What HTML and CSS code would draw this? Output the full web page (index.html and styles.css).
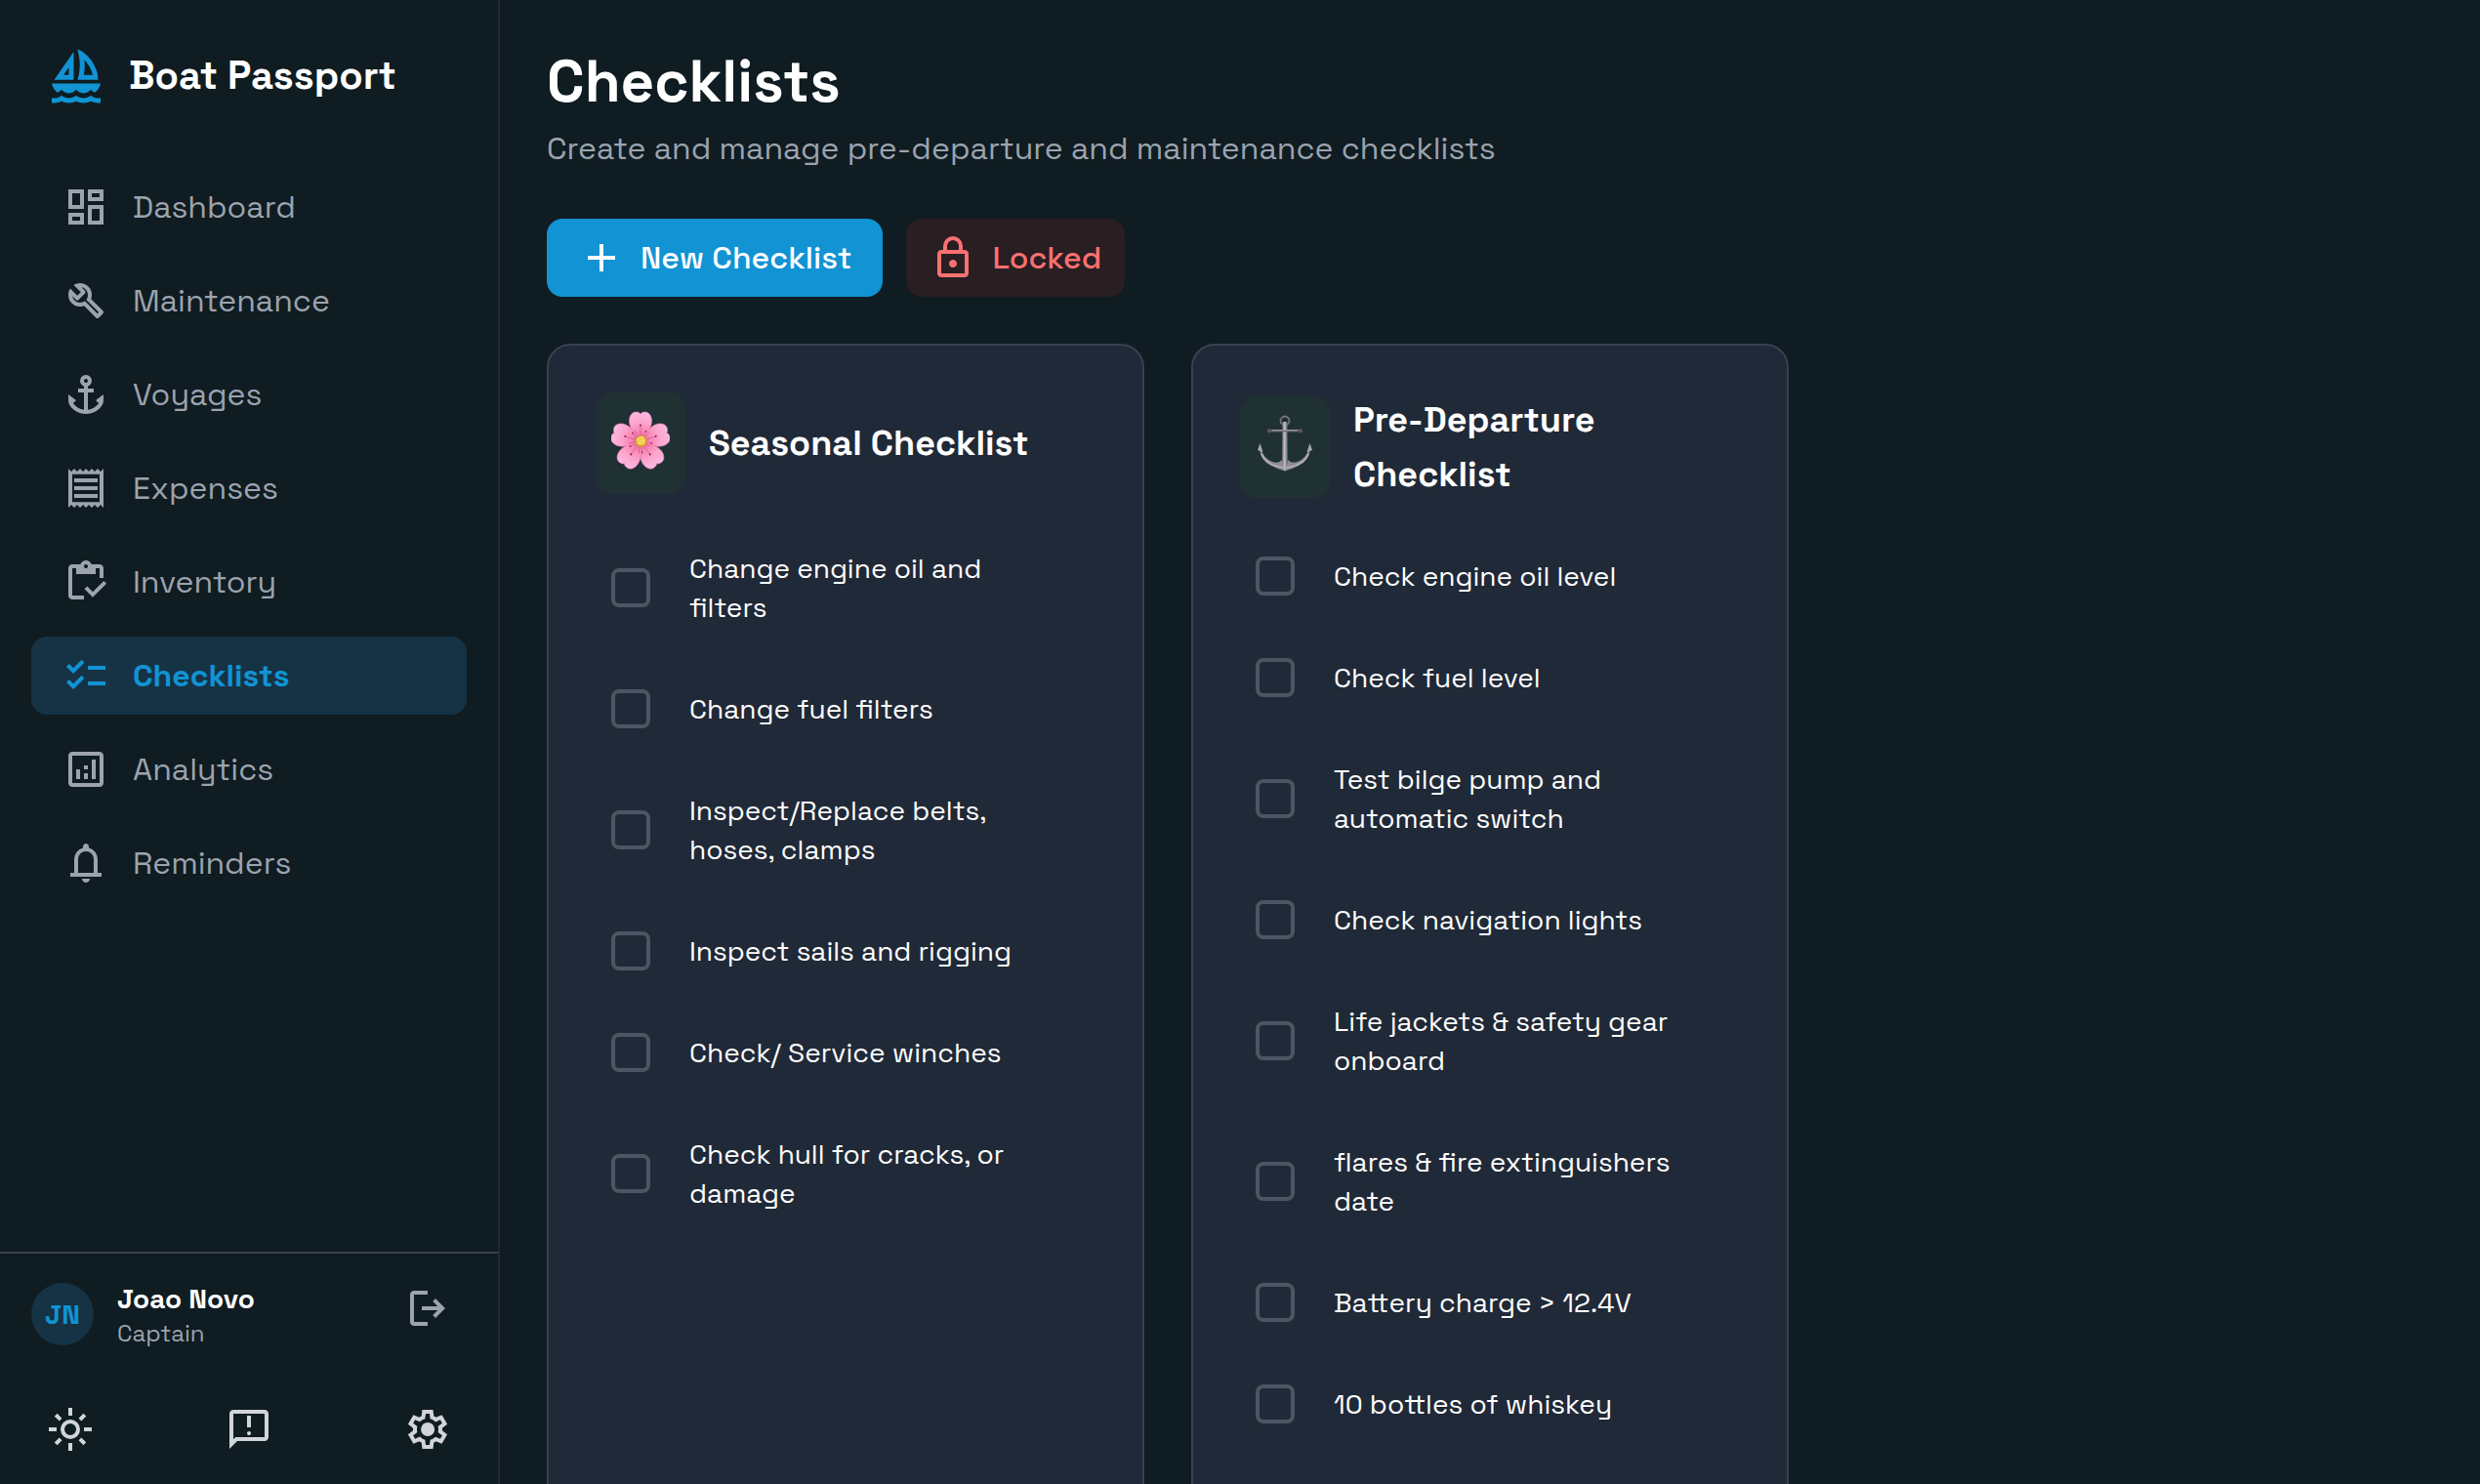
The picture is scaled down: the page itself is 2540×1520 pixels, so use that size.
FILE: index.html
```html
<!DOCTYPE html>
<html lang="en">
<head>
<meta charset="utf-8">
<meta name="viewport" content="width=device-width, initial-scale=1">
<title>Checklists - Boat Passport</title>
<link rel="stylesheet" href="styles.css">
</head>
<body>
<div class="app">
  <aside class="sidebar">
    <div class="brand">
      <svg class="brand-icon" viewBox="0 -960 960 960" aria-hidden="true"><path d="m120-420 320-460v460H120Zm153-80h87v-125l-87 125Zm227 80q12-28 26-98t14-142q0-72-13.5-148T500-920q61 18 121.5 67t109 117q48.5 68 79 149.5T840-420H500Zm104-80h148q-17-77-55.5-141T615-750q2 21 3.5 43.5T620-660q0 47-4.5 87T604-500ZM360-200q-36 0-67-17t-53-43q-14 15-30.5 28T173-211q-35-26-59.5-64.5T80-360h800q-9 46-33.5 84.5T787-211q-20-8-36.5-21T720-260q-23 26-53.5 43T600-200q-36 0-67-17t-53-43q-22 26-53 43t-67 17ZM80-40v-80h40q32 0 62-10t58-30q28 20 58 29.5t62 9.5q32 0 61.5-9.5T480-160q28 20 58 29.5t62 9.5q32 0 61.5-9.5T720-160q29 20 58.5 30t61.5 10h40v80h-40q-31 0-61-7.5T720-70q-29 15-59 22.5T600-40q-31 0-61-7.5T480-70q-29 15-59 22.5T360-40q-31 0-61-7.5T240-70q-29 15-59 22.5T120-40H80Z"/></svg>
      <span class="brand-name">Boat Passport</span>
    </div>
    <nav class="nav">
      <a class="nav-link" href="#dashboard"><svg class="icon" viewBox="0 -960 960 960" aria-hidden="true"><path d="M520-600v-240h320v240H520ZM120-440v-400h320v400H120Zm400 320v-400h320v400H520Zm-400 0v-240h320v240H120Zm80-400h160v-240H200v240Zm400 320h160v-240H600v240Zm0-480h160v-80H600v80ZM200-200h160v-80H200v80Z"/></svg>Dashboard</a>
      <a class="nav-link" href="#maintenance"><svg class="icon" viewBox="0 -960 960 960" aria-hidden="true"><path d="M686-132 444-376q-20 8-40.5 12t-43.5 4q-100 0-170-70t-70-170q0-36 10-68.5t28-61.5l146 146 72-72-146-146q29-18 61.5-28t68.5-10q100 0 170 70t70 170q0 23-4 43.5T584-516l244 242q12 12 12 29t-12 29l-84 84q-12 12-29 12t-29-12Zm29-85 27-27-256-256q18-20 26-46.5t8-53.5q0-60-38.5-104.5T386-758l74 74q12 12 12 28t-12 28L332-500q-12 12-28 12t-28-12l-74-74q9 57 53.5 95.5T360-440q26 0 52-8t47-25l256 256Z"/></svg>Maintenance</a>
      <a class="nav-link" href="#voyages"><svg class="icon" viewBox="0 -960 960 960" aria-hidden="true"><path d="M480-80q-61 0-125-22t-116-60q-52-38-85.5-89T120-360v-120l160 120-62 62q29 51 93.5 89T440-164v-356H320v-80h120v-47q-36-13-58-43.5T360-760q0-50 35-85t85-35q50 0 85 35t35 85q0 39-22 69.5T520-647v47h120v80H520v356q64-7 128.5-45t93.5-89l-62-62 160-120v120q0 58-33.5 109T721-162q-52 38-116 60T480-80Zm0-640q17 0 28.5-11.5T520-760q0-17-11.5-28.5T480-800q-17 0-28.5 11.5T440-760q0 17 11.5 28.5T480-720Z"/></svg>Voyages</a>
      <a class="nav-link" href="#expenses"><svg class="icon" viewBox="0 0 24 24" aria-hidden="true"><path d="M19.5 3.5L18 2l-1.5 1.5L15 2l-1.5 1.5L12 2l-1.5 1.5L9 2 7.5 3.5 6 2 4.5 3.5 3 2v20l1.500-1.500L6 22l1.500-1.500L9 22l1.500-1.500L12 22l1.500-1.500L15 22l1.500-1.500L18 22l1.500-1.500L21 22V2l-1.500 1.500zM19 19.090H5V4.910h14v14.180zM6 15h12v2H6zm0-4h12v2H6zm0-4h12v2H6z"/></svg>Expenses</a>
      <a class="nav-link" href="#inventory"><svg class="icon" viewBox="0 -960 960 960" aria-hidden="true"><path d="M620-163 450-333l56-56 114 114 226-226 56 56-282 282Zm220-397h-80v-200h-80v120H280v-120h-80v560h240v80H200q-33 0-56.5-23.5T120-200v-560q0-33 23.5-56.5T200-840h167q11-35 43-57.5t70-22.5q40 0 71.500 22.500T594-840h166q33 0 56.500 23.500T840-760v200ZM480-760q17 0 28.500-11.500T520-800q0-17-11.500-28.500T480-840q-17 0-28.500 11.500T440-800q0 17 11.500 28.500T480-760Z"/></svg>Inventory</a>
      <a class="nav-link active" href="#checklists" aria-current="page"><svg class="icon" viewBox="0 -960 960 960" aria-hidden="true"><path d="M222-200 80-342l56-56 85 85 170-170 56 57-225 226Zm0-320L80-662l56-56 85 85 170-170 56 57-225 226Zm298 240v-80h360v80H520Zm0-320v-80h360v80H520Z"/></svg>Checklists</a>
      <a class="nav-link" href="#analytics"><svg class="icon" viewBox="0 -960 960 960" aria-hidden="true"><path d="M280-280h80v-200h-80v200Zm320 0h80v-400h-80v400Zm-160 0h80v-120h-80v120Zm0-200h80v-80h-80v80ZM200-120q-33 0-56.500-23.500T120-200v-560q0-33 23.500-56.500T200-840h560q33 0 56.500 23.500T840-760v560q0 33-23.500 56.500T760-120H200Zm0-80h560v-560H200v560Z"/></svg>Analytics</a>
      <a class="nav-link" href="#reminders"><svg class="icon" viewBox="0 -960 960 960" aria-hidden="true"><path d="M160-200v-80h80v-280q0-83 50-147.500T420-792v-28q0-25 17.500-42.500T480-880q25 0 42.500 17.500T540-820v28q80 20 130 84.500T720-560v280h80v80H160Zm320 120q-33 0-56.500-23.500T400-160h160q0 33-23.500 56.500T480-80ZM320-280h320v-280q0-66-47-113t-113-47q-66 0-113 47t-47 113v280Z"/></svg>Reminders</a>
    </nav>
    <footer class="account">
      <div class="user">
        <span class="avatar">JN</span>
        <div class="user-text">
          <span class="user-name">Joao Novo</span>
          <span class="user-role">Captain</span>
        </div>
        <button class="icon-button logout" type="button" aria-label="Log out"><svg class="icon" viewBox="0 -960 960 960" aria-hidden="true"><path d="M200-120q-33 0-56.500-23.500T120-200v-560q0-33 23.500-56.500T200-840h280v80H200v560h280v80H200Zm440-160-55-58 102-102H360v-80h327L585-622l55-58 200 200-200 200Z"/></svg></button>
      </div>
      <div class="tools">
        <button class="icon-button" type="button" aria-label="Light mode"><svg class="icon" viewBox="0 -960 960 960" aria-hidden="true"><path d="M480-360q50 0 85-35t35-85q0-50-35-85t-85-35q-50 0-85 35t-35 85q0 50 35 85t85 35Zm0 80q-83 0-141.500-58.500T280-480q0-83 58.500-141.500T480-680q83 0 141.500 58.500T680-480q0 83-58.500 141.500T480-280ZM200-440H40v-80h160v80Zm720 0H760v-80h160v80ZM440-760v-160h80v160h-80Zm0 720v-160h80v160h-80ZM256-650l-101-97 57-59 96 100-52 56Zm492 496-97-101 53-55 101 97-57 59Zm-98-550 97-101 59 57-100 96-56-52ZM154-212l101-97 55 53-97 101-59-57Z"/></svg></button>
        <button class="icon-button" type="button" aria-label="Feedback"><svg class="icon" viewBox="0 -960 960 960" aria-hidden="true"><path d="M480-360q17 0 28.500-11.500T520-400q0-17-11.500-28.500T480-440q-17 0-28.500 11.500T440-400q0 17 11.500 28.500T480-360Zm-40-160h80v-240h-80v240ZM80-80v-720q0-33 23.500-56.500T160-880h640q33 0 56.500 23.500T880-800v480q0 33-23.500 56.500T800-240H240L80-80Zm126-240h594v-480H160v525l46-45Z"/></svg></button>
        <button class="icon-button" type="button" aria-label="Settings"><svg class="icon" viewBox="0 -960 960 960" aria-hidden="true"><path d="m370-80-16-128q-13-5-24.500-12T307-235l-119 50L78-375l103-78q-1-7-1-13.500v-27q0-6.500 1-13.500L78-585l110-190 119 50q11-8 23-15t24-12l16-128h220l16 128q13 5 24.500 12t22.500 15l119-50 110 190-103 78q1 7 1 13.500v27q0 6.500-2 13.500l103 78-110 190-118-50q-11 8-23 15t-24 12L590-80H370Zm70-80h79l14-106q31-8 57.500-23.500T639-327l99 41 39-68-86-65q5-14 7-29.500t2-31.500q0-16-2-31.500t-7-29.500l86-65-39-68-99 42q-22-23-48.500-38.500T533-694l-13-106h-79l-14 106q-31 8-57.500 23.500T321-633l-99-41-39 68 86 64q-5 15-7 30t-2 32q0 16 2 31t7 30l-86 65 39 68 99-42q22 23 48.500 38.500T427-266l13 106Zm42-180q58 0 99-41t41-99q0-58-41-99t-99-41q-59 0-99.500 41T342-480q0 58 40.500 99t99.500 41Z"/></svg></button>
      </div>
    </footer>
  </aside>

  <main class="main">
    <header class="page-header">
      <h1 class="title">Checklists</h1>
      <p class="subtitle">Create and manage pre-departure and maintenance checklists</p>
    </header>
    <div class="actions">
      <button class="button primary" type="button"><svg class="icon" viewBox="0 -960 960 960" aria-hidden="true"><path d="M440-440H200v-80h240v-240h80v240h240v80H520v240h-80v-240Z"/></svg>New Checklist</button>
      <button class="button locked" type="button"><svg class="icon" viewBox="0 -960 960 960" aria-hidden="true"><path d="M240-80q-33 0-56.500-23.500T160-160v-400q0-33 23.500-56.500T240-640h40v-80q0-83 58.500-141.500T480-920q83 0 141.500 58.500T680-720v80h40q33 0 56.500 23.500T800-560v400q0 33-23.500 56.500T720-80H240Zm0-80h480v-400H240v400Zm240-120q33 0 56.500-23.500T560-360q0-33-23.500-56.500T480-440q-33 0-56.500 23.500T400-360q0 33 23.500 56.500T480-280ZM360-640h240v-80q0-50-35-85t-85-35q-50 0-85 35t-35 85v80Z"/></svg>Locked</button>
    </div>

    <div class="cards">
      <section class="card">
        <div class="card-header">
          <span class="tile">
            <svg class="emoji" viewBox="0 0 60 60" aria-hidden="true">
              <defs>
                <radialGradient id="petal" gradientUnits="userSpaceOnUse" cx="30" cy="31" r="30">
                  <stop offset="0" stop-color="#d9488a"/><stop offset=".3" stop-color="#f682b0"/><stop offset=".65" stop-color="#fda3cd"/><stop offset="1" stop-color="#fbb9e0"/>
                </radialGradient>
                <g id="leaf">
                  <path d="M30 31C24 24 18 17 18.500 9C19 4 22 .5 26 1Q29 1 30 3Q31 1 34 1C38 .5 41 4 41.500 9C42 17 36 24 30 31Z" fill="url(#petal)" stroke="#e985b5" stroke-width=".6"/>
                  <path d="M30 29V15M29 28 24 20M31 28 36 20" stroke="#d65c93" stroke-width=".7" fill="none"/>
                  <circle cx="30" cy="14.500" r="1" fill="#852044"/><circle cx="35.500" cy="21" r="1" fill="#a52d58"/>
                </g>
              </defs>
              <use href="#leaf"/>
              <use href="#leaf" transform="rotate(72 30 31)"/>
              <use href="#leaf" transform="rotate(144 30 31)"/>
              <use href="#leaf" transform="rotate(216 30 31)"/>
              <use href="#leaf" transform="rotate(288 30 31)"/>
              <circle cx="30.500" cy="31" r="6" fill="#d99f27"/>
              <circle cx="30.500" cy="30.500" r="4.500" fill="#f3ce4e"/>
              <path d="M27 29h1m3-2h1m1 3h1m-4 1h1m-3 2h1m4 0h1" stroke="#fff1a1" stroke-width="1.200"/>
            </svg>
          </span>
          <h2 class="card-title">Seasonal Checklist</h2>
        </div>
        <ul class="items">
          <li><label class="item"><input class="check" type="checkbox"><span class="item-text">Change engine oil and filters</span></label></li>
          <li><label class="item"><input class="check" type="checkbox"><span class="item-text">Change fuel filters</span></label></li>
          <li><label class="item"><input class="check" type="checkbox"><span class="item-text">Inspect/Replace belts, hoses, clamps</span></label></li>
          <li><label class="item"><input class="check" type="checkbox"><span class="item-text">Inspect sails and rigging</span></label></li>
          <li><label class="item"><input class="check" type="checkbox"><span class="item-text">Check/ Service winches</span></label></li>
          <li><label class="item"><input class="check" type="checkbox"><span class="item-text">Check hull for cracks, or damage</span></label></li>
        </ul>
      </section>

      <section class="card">
        <div class="card-header">
          <span class="tile">
            <svg class="emoji" viewBox="0 0 60 60" aria-hidden="true">
              <defs>
                <linearGradient id="steel" x1="0" x2="1"><stop offset="0" stop-color="#66646a"/><stop offset=".45" stop-color="#c4c3c8"/><stop offset="1" stop-color="#55535a"/></linearGradient>
              </defs>
              <circle cx="30" cy="6" r="4.500" fill="none" stroke="#77767b" stroke-width="1.800"/>
              <path d="M4 35Q5 47 16 52Q24 56 30 57.500Q36 56 44 52Q55 47 56 35L54.500 35Q52 44 43 48Q36 50 33 46H27Q24 50 17 48Q8 44 5.500 35Z" fill="#8f8d93"/>
              <path d="M6 40Q10 49 20 52Q27 54 30 54Q33 54 40 52Q50 49 54 40" fill="none" stroke="#bdbbc1" stroke-width="1.200"/>
              <path d="M4.500 29 7.500 38 2 36ZM55.500 29 58 36 52.500 38Z" fill="#aaa8ae"/>
              <path d="M27.500 7h5L33 48 30 58 27 48Z" fill="url(#steel)"/>
              <path d="M14 15h32v2.400H14z" fill="#706e75"/>
              <path d="M17 15.500h26" stroke="#aaa9af" stroke-width=".8"/>
              <circle cx="14" cy="16.200" r="2.200" fill="#57565c"/><circle cx="46" cy="16.200" r="2.200" fill="#57565c"/>
            </svg>
          </span>
          <h2 class="card-title">Pre-Departure Checklist</h2>
        </div>
        <ul class="items">
          <li><label class="item"><input class="check" type="checkbox"><span class="item-text">Check engine oil level</span></label></li>
          <li><label class="item"><input class="check" type="checkbox"><span class="item-text">Check fuel level</span></label></li>
          <li><label class="item"><input class="check" type="checkbox"><span class="item-text">Test bilge pump and automatic switch</span></label></li>
          <li><label class="item"><input class="check" type="checkbox"><span class="item-text">Check navigation lights</span></label></li>
          <li><label class="item"><input class="check" type="checkbox"><span class="item-text">Life jackets &amp; safety gear onboard</span></label></li>
          <li><label class="item"><input class="check" type="checkbox"><span class="item-text">flares &amp; fire extinguishers date</span></label></li>
          <li><label class="item"><input class="check" type="checkbox"><span class="item-text">Battery charge &gt; 12.4V</span></label></li>
          <li><label class="item"><input class="check" type="checkbox"><span class="item-text">10 bottles of whiskey</span></label></li>
        </ul>
      </section>
    </div>
  </main>
</div>
</body>
</html>
```
FILE: styles.css
```css
:root {
  --bg: #0f1c21;
  --surface: #202937;
  --line: #374151;
  --muted: #9ca3af;
  --primary: #1193d4;
  --primary-soft: #153345;
}

* {
  box-sizing: border-box;
}

body {
  margin: 0;
  background: var(--bg);
  color: #fff;
  font-family: "Space Grotesk", Inter, sans-serif;
  font-size: 32px;
  line-height: 48px;
}

h1, h2, p, ul {
  margin: 0;
  padding: 0;
}

ul {
  list-style: none;
}

button {
  border: 0;
  font: inherit;
  cursor: pointer;
}

.icon {
  display: block;
  flex: none;
  width: 48px;
  height: 48px;
  fill: currentColor;
}

.app {
  display: flex;
  height: 100vh;
}

/* Sidebar */

.sidebar {
  display: flex;
  flex: none;
  flex-direction: column;
  width: 512px;
  border-right: 2px solid var(--surface);
}

.brand {
  display: flex;
  align-items: center;
  gap: 24px;
  padding: 48px 48px 32px;
}

.brand-icon {
  flex: none;
  width: 60px;
  height: 60px;
  fill: var(--primary);
}

.brand-name {
  font-size: 40px;
  font-weight: 700;
  line-height: 60px;
}

.nav {
  display: flex;
  flex: 1;
  flex-direction: column;
  gap: 16px;
  padding: 32px;
}

.nav-link {
  display: flex;
  align-items: center;
  gap: 24px;
  padding: 16px 32px;
  border-radius: 16px;
  color: var(--muted);
  text-decoration: none;
}

.nav-link.active {
  background: var(--primary-soft);
  color: var(--primary);
  font-weight: 700;
}

.account {
  border-top: 2px solid var(--line);
  padding: 24px 32px 16px;
}

.user {
  display: flex;
  align-items: center;
  gap: 24px;
  min-height: 76px;
  margin-bottom: 40px;
}

.avatar {
  display: grid;
  flex: none;
  place-items: center;
  width: 64px;
  height: 64px;
  border-radius: 50%;
  background: var(--primary-soft);
  color: var(--primary);
  font-size: 28px;
  font-weight: 700;
}

.user-text {
  display: flex;
  flex: 1;
  flex-direction: column;
}

.user-name {
  font-size: 28px;
  font-weight: 600;
  line-height: 40px;
}

.user-role {
  color: var(--muted);
  font-size: 24px;
  line-height: 32px;
}

.icon-button {
  padding: 16px;
  background: none;
  color: #d1d5db;
}

.logout {
  align-self: flex-start;
  padding: 8px 16px;
  color: var(--muted);
}

.tools {
  display: flex;
  justify-content: space-between;
}

/* Main area */

.main {
  flex: 1;
  min-width: 0;
  overflow-y: auto;
  padding: 48px;
  scrollbar-width: none;
}

.page-header {
  margin-bottom: 48px;
}

.title {
  margin-bottom: 8px;
  font-size: 60px;
  font-weight: 700;
  line-height: 72px;
}

.subtitle {
  color: var(--muted);
}

.actions {
  display: flex;
  gap: 24px;
  margin-bottom: 48px;
}

.button {
  display: flex;
  align-items: center;
  gap: 16px;
  padding: 16px 24px;
  border-radius: 16px;
  font-weight: 500;
}

.primary {
  padding: 16px 32px;
  background: var(--primary);
  color: #fff;
}

.locked {
  background: #291e21;
  color: #f87171;
}

.cards {
  display: grid;
  grid-template-columns: repeat(3, minmax(0, 1fr));
  gap: 48px;
}

.card {
  padding: 48px 48px 96px;
  border: 2px solid var(--line);
  border-radius: 24px;
  background: var(--surface);
}

.card-header {
  display: flex;
  align-items: center;
  gap: 24px;
  margin-bottom: 32px;
}

.tile {
  flex: none;
  padding: 19px 16px 25px;
  border-radius: 16px;
  background: #1f3133;
}

.emoji {
  display: block;
  width: 60px;
  height: 60px;
}

.card-title {
  font-size: 36px;
  font-weight: 700;
  line-height: 56px;
}

.items {
  display: flex;
  flex-direction: column;
  gap: 16px;
}

.item {
  display: flex;
  align-items: center;
  gap: 40px;
  padding: 24px 48px 24px 16px;
}

.check {
  flex: none;
  width: 40px;
  height: 40px;
  margin: 0;
  appearance: none;
  border: 4px solid #4b5563;
  border-radius: 8px;
}

.check:checked {
  border-color: var(--primary);
  background: var(--primary);
}

.item-text {
  flex: 1;
  font-size: 28px;
  line-height: 40px;
}
```
